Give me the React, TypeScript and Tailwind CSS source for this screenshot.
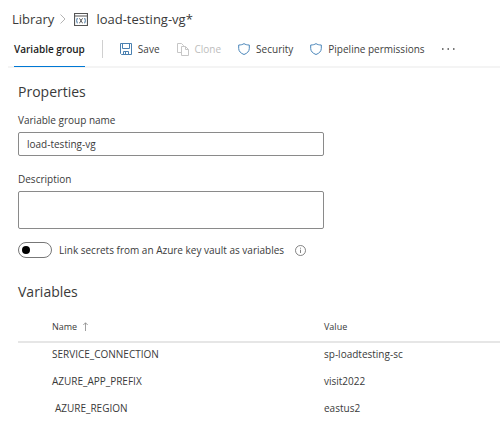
import type { ReactNode } from 'react';

const variables = [
  { name: 'SERVICE_CONNECTION', value: 'sp-loadtesting-sc' },
  { name: 'AZURE_APP_PREFIX', value: 'visit2022' },
  { name: 'AZURE_REGION', value: 'eastus2', indent: true },
];

function SaveIcon() {
  return (
    <svg width="12" height="12" viewBox="0 0 12 12" fill="none" stroke="#4a80b0" aria-hidden="true">
      <path d="M.5 .5h11v11h-10l-1-1z" />
      <path d="M2.500 .5v5h7v-5M3.500 11.500v-3h5v3M5.500 9v2" />
    </svg>
  );
}

function CloneIcon() {
  return (
    <svg width="12" height="13" viewBox="0 0 12 13" fill="none" stroke="#c6c6c6" aria-hidden="true">
      <path d="M4 9.500H.5v-9h4l2 2v1M4.500 3.500h4l3 3v6h-7zM8.500 3.500v3h3" />
    </svg>
  );
}

function ShieldIcon() {
  return (
    <svg width="12" height="12" viewBox="0 0 12 12" fill="none" stroke="#4a86ba" aria-hidden="true">
      <path d="M6 .6C4.700 1.600 2.800 2 .7 2v3.500C.7 8.200 2.700 10.300 6 11.500c3.300-1.200 5.300-3.300 5.300-6V2C9.200 2 7.300 1.600 6 .6z" />
    </svg>
  );
}

function GroupIcon() {
  return (
    <svg width="14" height="13" viewBox="0 0 14 13" fill="none" stroke="#555" aria-hidden="true">
      <path d="M.5 .5h13v12H.5zM.5 3h13" strokeWidth="1.200" />
      <path d="M3.300 5Q2 7.500 3.300 10.300M10.700 5q1.300 2.500 0 5.300" stroke="#3c6f9c" />
      <path d="M5.200 5.500c1.800 0 1.800 4.500 3.600 4.500M8.800 5.500c-1.800 0-1.800 4.500-3.600 4.500" />
    </svg>
  );
}

function ToolbarButton({ icon, label, disabled }: { icon: ReactNode; label: string; disabled?: boolean }) {
  return (
    <button
      type="button"
      disabled={disabled}
      className="flex items-center gap-1.5 whitespace-nowrap text-[#404040] disabled:text-[#bdbdbd]"
    >
      {icon}
      {label}
    </button>
  );
}

export default function App() {
  return (
    <div className="min-h-screen bg-white pt-2 font-['Open_Sans','Noto_Sans',sans-serif] text-[10px] leading-4 text-[#3a3a3a]">
      <nav aria-label="Breadcrumb" className="flex h-6 items-center pb-0.5 pl-3 text-[13px] leading-5">
        <a href="#library">Library</a>
        <svg className="mr-2 ml-1.5" width="6" height="10" viewBox="0 0 6 10" fill="none" stroke="#b4b4b4" aria-hidden="true">
          <path d="M.5 .5 5 5 .5 9.500" />
        </svg>
        <GroupIcon />
        <span className="ml-2">load-testing-vg*</span>
      </nav>

      <div className="ml-2 flex h-9 items-stretch gap-[17px] border-b-2 border-[#f4f4f4] pl-1.5">
        <a
          href="#group"
          aria-current="page"
          className="-mb-px flex items-center border-b border-[#0078d4] font-semibold whitespace-nowrap text-[#222]"
        >
          Variable group
        </a>
        <div className="my-2 w-px bg-[#d0d0d0]" />
        <ToolbarButton icon={<SaveIcon />} label="Save" />
        <ToolbarButton icon={<CloneIcon />} label="Clone" disabled />
        <ToolbarButton icon={<ShieldIcon />} label="Security" />
        <ToolbarButton icon={<ShieldIcon />} label="Pipeline permissions" />
        <button type="button" aria-label="More actions" className="flex items-center">
          <svg width="13" height="2" viewBox="0 0 13 2" fill="#777" aria-hidden="true">
            <path d="M0 0h1.500v2H0zM5.500 0H7v2H5.500zM11 0h1.500v2H11z" />
          </svg>
        </button>
      </div>

      <main className="pl-[18px]">
        <h1 className="pt-3 text-[14px] leading-6">Properties</h1>
        <div className="flex max-w-[306px] flex-col">
          <label htmlFor="group-name" className="mt-2 mb-1">Variable group name</label>
          <input
            id="group-name"
            defaultValue="load-testing-vg"
            className="h-6 rounded-xs border border-[#8a8a8a] px-2"
          />
          <label htmlFor="description" className="mt-[15px] mb-1">Description</label>
          <textarea
            id="description"
            className="h-[38px] resize-none rounded-xs border border-[#8a8a8a] px-2 py-1"
          />
        </div>
        <div className="mt-[11px] flex h-5 items-center">
          <label className="flex items-center gap-[7px] whitespace-nowrap">
            <input
              type="checkbox"
              role="switch"
              className="h-4 w-[34px] appearance-none rounded-full border border-[#777] before:mt-[3px] before:ml-[3px] before:block before:size-2 before:rounded-full before:bg-black checked:before:ml-[21px]"
            />
            Link secrets from an Azure key vault as variables
          </label>
          <button type="button" aria-label="More information" className="ml-[11px]">
            <svg width="11" height="11" viewBox="0 0 11 11" fill="none" stroke="#666" aria-hidden="true">
              <circle cx="5.500" cy="5.500" r="5" strokeWidth=".8" />
              <path d="M5.500 4.700V8M5.500 2.700v1" strokeWidth=".8" />
            </svg>
          </button>
        </div>

        <h2 className="mt-5 text-[14px] leading-6">Variables</h2>
        <table className="mt-2 w-full table-fixed text-left">
          <thead>
            <tr className="h-[30px] border-b-2 border-[#e6e6e6] text-[9px]">
              <th className="w-[306px] pl-[34px] font-normal">
                <span className="flex items-center gap-1.5">
                  Name
                  <svg width="5" height="9" viewBox="0 0 5 9" fill="none" stroke="#888" aria-hidden="true">
                    <path d="M2.500 9V.8M.3 3 2.500 .8 4.700 3" strokeWidth=".8" />
                  </svg>
                </span>
              </th>
              <th className="font-normal">Value</th>
            </tr>
          </thead>
          <tbody>
            {variables.map((variable) => (
              <tr key={variable.name} className="h-[27px]">
                <td className={variable.indent ? 'pb-1 pl-[37px]' : 'pb-1 pl-[34px]'}>{variable.name}</td>
                <td className="pb-1">{variable.value}</td>
              </tr>
            ))}
          </tbody>
        </table>
      </main>
    </div>
  );
}
